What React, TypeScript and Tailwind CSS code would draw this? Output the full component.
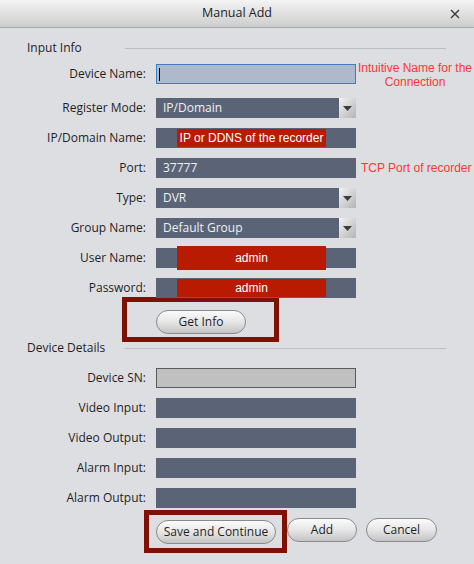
import React from 'react'

const font = { fontFamily: '"Open Sans", "DejaVu Sans", sans-serif' }

function Label({ children }: { children: React.ReactNode }) {
  return <div className="w-[146px] shrink-0 text-right text-[12px] text-[#1f1f1f]">{children}</div>
}

function Field({ value, dropdown, overlay, light }: { value?: string; dropdown?: boolean; overlay?: React.ReactNode; light?: boolean }) {
  return (
    <div
      className={`relative ml-[10px] h-[20px] w-[200px] shrink-0 flex items-center ${
        light ? 'bg-[#c0c0c0] border border-[#5a5a5a]' : 'bg-[#5b6477]'
      }`}
    >
      {value && <span className="pl-[7px] text-[12px] text-[#eef0f4]">{value}</span>}
      {dropdown && (
        <div className="absolute right-0 top-0 h-full w-[17px] bg-gradient-to-br from-[#f4f4f4] to-[#b4b4b4] flex items-center justify-center">
          <svg width="9" height="5" viewBox="0 0 9 5">
            <path d="M0 0 L9 0 L4.5 5 Z" fill="#3c3c3c" />
          </svg>
        </div>
      )}
      {overlay}
    </div>
  )
}

function RedTag({ text, tall }: { text: string; tall?: boolean }) {
  return (
    <div
      className={`absolute left-[21px] w-[149px] bg-[#b81a02] flex items-center justify-center whitespace-nowrap text-white text-[12px] ${
        tall ? 'top-[-2px] h-[24px]' : 'top-[1px] h-[18px]'
      }`}
      style={{ fontFamily: '"Liberation Sans", Arial, sans-serif' }}
    >
      {text}
    </div>
  )
}

function Section({ title }: { title: string }) {
  return (
    <div className="flex items-center h-[16px]">
      <div className="w-[125px] pl-[27px] text-[12px] text-[#1f1f1f] shrink-0 whitespace-nowrap">{title}</div>
      <div className="h-px w-[321px] bg-[#b9bcc3]" />
    </div>
  )
}

function Row({ label, children, note }: { label: string; children: React.ReactNode; note?: React.ReactNode }) {
  return (
    <div className="flex items-center h-[20px]">
      <Label>{label}</Label>
      {children}
      {note}
    </div>
  )
}

function Pill({ text, w }: { text: string; w: string }) {
  return (
    <button
      className={`${w} h-[24px] rounded-full border border-[#8a8a8a] bg-gradient-to-b from-[#fbfbfb] via-[#e6e6e6] to-[#c4c4c4] text-[12px] text-[#1f1f1f]`}
      style={font}
    >
      {text}
    </button>
  )
}

const noteStyle = { fontFamily: '"Liberation Sans", Arial, sans-serif' }

export default function App() {
  return (
    <div className="w-[474px] h-[564px] bg-[#dddee2] flex flex-col" style={font}>
      {/* Title bar */}
      <div className="relative h-[28px] shrink-0 bg-gradient-to-b from-[#f4f4f4] to-[#cdcdcd] border-b border-[#a9a9a9] flex items-center justify-center">
        <span className="text-[12.5px] text-[#222]">Manual Add</span>
        <svg className="absolute right-[14px] top-[9px]" width="10" height="10" viewBox="0 0 10 10">
          <path d="M1 1 L9 9 M9 1 L1 9" stroke="#3a3a3a" strokeWidth="1.4" />
        </svg>
      </div>

      <div className="mt-[12px]">
        <Section title="Input Info" />
      </div>

      <div className="mt-[8px] flex flex-col">
        <Row
          label="Device Name:"
          note={
            <div className="ml-[1px] mt-[-3px] h-[20px] w-[116px] text-center text-[12px] leading-[14px] text-[#ff3535] self-start whitespace-nowrap" style={noteStyle}>
              Intuitive Name for the
              <br />
              Connection
            </div>
          }
        >
          <div className="ml-[10px] h-[20px] w-[200px] shrink-0 border border-[#3f7bbd] bg-[#aebacb] flex items-center pl-[2px]">
            <div className="h-[13px] w-px bg-black" />
          </div>
        </Row>
        <div className="mt-[14px] flex flex-col gap-[10px]">
          <Row label="Register Mode:">
            <Field value="IP/Domain" dropdown />
          </Row>
          <Row label="IP/Domain Name:">
            <Field overlay={<RedTag text="IP or DDNS of the recorder" />} />
          </Row>
          <Row
            label="Port:"
            note={
              <div className="ml-[5px] text-[12px] text-[#ff3535] whitespace-nowrap" style={noteStyle}>
                TCP Port of recorder
              </div>
            }
          >
            <Field value="37777" />
          </Row>
          <Row label="Type:">
            <Field value="DVR" dropdown />
          </Row>
          <Row label="Group Name:">
            <Field value="Default Group" dropdown />
          </Row>
          <Row label="User Name:">
            <Field overlay={<RedTag text="admin" tall />} />
          </Row>
          <Row label="Password:">
            <Field overlay={<RedTag text="admin" />} />
          </Row>
        </div>
      </div>

      {/* Get Info highlighted */}
      <div className="ml-[122px] mt-[-1px] w-[157px] h-[45px] border-[5px] border-[#7d1204] pl-[29px] pt-[6px]">
        <Pill text="Get Info" w="w-[90px]" />
      </div>

      <div className="mt-[-2px]">
        <Section title="Device Details" />
      </div>

      <div className="mt-[12px] flex flex-col gap-[10px]">
        <Row label="Device SN:">
          <Field light />
        </Row>
        <Row label="Video Input:">
          <Field />
        </Row>
        <Row label="Video Output:">
          <Field />
        </Row>
        <Row label="Alarm Input:">
          <Field />
        </Row>
        <Row label="Alarm Output:">
          <Field />
        </Row>
      </div>

      <div className="mt-[2px] flex items-start">
        <div className="ml-[144px] w-[143px] h-[43px] border-[5px] border-[#7d1204] pl-[7px] pt-[3px]">
          <Pill text="Save and Continue" w="w-[120px]" />
        </div>
        <div className="mt-[8px] flex gap-[9px]">
          <Pill text="Add" w="w-[70px]" />
          <Pill text="Cancel" w="w-[71px]" />
        </div>
      </div>
    </div>
  )
}
